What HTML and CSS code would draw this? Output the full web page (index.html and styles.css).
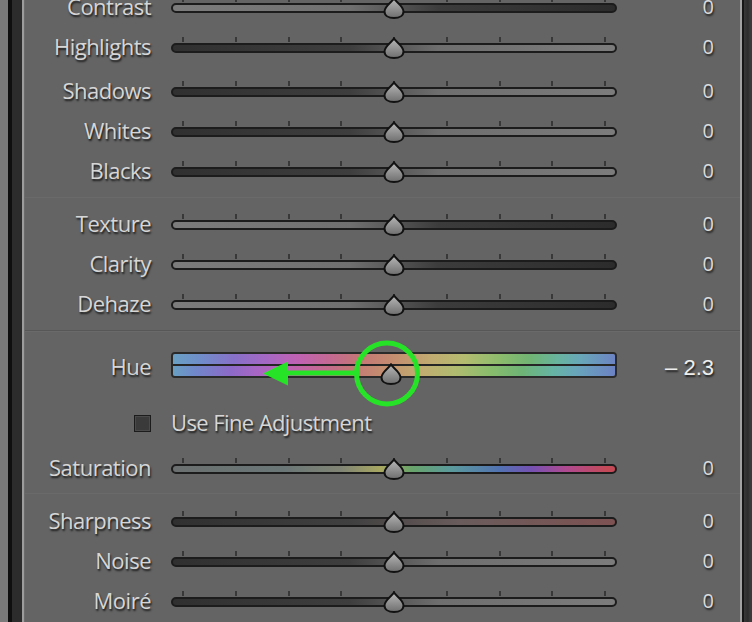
FILE: index.html
```html
<!DOCTYPE html>
<html>
<head>
<meta charset="utf-8">
<title>Develop</title>
<link rel="stylesheet" href="styles.css">
</head>
<body>

<svg class="defs" width="0" height="0">
	<defs>
		<linearGradient id="thumbFill" x1="0" y1="0" x2="0" y2="1">
			<stop offset="0" stop-color="#b8b8b8"/>
			<stop offset="1" stop-color="#6e6e6e"/>
		</linearGradient>
		<symbol id="thumb" viewBox="0 0 22 22">
			<path d="M11 1.5 C12.5 4.5 20.5 9 20.5 14.5 C20.5 18.5 16.5 21 11 21 C5.5 21 1.5 18.5 1.5 14.5 C1.5 9 9.5 4.5 11 1.5 Z" fill="url(#thumbFill)" stroke="#121212" stroke-width="2"/>
		</symbol>
	</defs>
</svg>

<div class="frame">
	<div class="edgeLeft"></div>

	<div class="panel">

		<div class="group g1">
			<div class="row">
				<div class="label">Contrast</div>
				<div class="slider">
					<div class="ticks"><i></i><i></i><i></i><i></i><i></i><i></i><i></i><i></i><i></i></div>
					<div class="track darkRight"></div>
					<svg class="thumb"><use href="#thumb"/></svg>
				</div>
				<div class="value">0</div>
			</div>
			<div class="row">
				<div class="label">Highlights</div>
				<div class="slider">
					<div class="ticks"><i></i><i></i><i></i><i></i><i></i><i></i><i></i><i></i><i></i></div>
					<div class="track lightRight"></div>
					<svg class="thumb"><use href="#thumb"/></svg>
				</div>
				<div class="value">0</div>
			</div>
			<div class="row shadows">
				<div class="label">Shadows</div>
				<div class="slider">
					<div class="ticks"><i></i><i></i><i></i><i></i><i></i><i></i><i></i><i></i><i></i></div>
					<div class="track lightRight"></div>
					<svg class="thumb"><use href="#thumb"/></svg>
				</div>
				<div class="value">0</div>
			</div>
			<div class="row">
				<div class="label">Whites</div>
				<div class="slider">
					<div class="ticks"><i></i><i></i><i></i><i></i><i></i><i></i><i></i><i></i><i></i></div>
					<div class="track lightRight"></div>
					<svg class="thumb"><use href="#thumb"/></svg>
				</div>
				<div class="value">0</div>
			</div>
			<div class="row">
				<div class="label">Blacks</div>
				<div class="slider">
					<div class="ticks"><i></i><i></i><i></i><i></i><i></i><i></i><i></i><i></i><i></i></div>
					<div class="track lightRight"></div>
					<svg class="thumb"><use href="#thumb"/></svg>
				</div>
				<div class="value">0</div>
			</div>
		</div>

		<div class="sep"></div>

		<div class="group g2">
			<div class="row">
				<div class="label">Texture</div>
				<div class="slider">
					<div class="ticks"><i></i><i></i><i></i><i></i><i></i><i></i><i></i><i></i><i></i></div>
					<div class="track darkRight"></div>
					<svg class="thumb"><use href="#thumb"/></svg>
				</div>
				<div class="value">0</div>
			</div>
			<div class="row">
				<div class="label">Clarity</div>
				<div class="slider">
					<div class="ticks"><i></i><i></i><i></i><i></i><i></i><i></i><i></i><i></i><i></i></div>
					<div class="track darkRight"></div>
					<svg class="thumb"><use href="#thumb"/></svg>
				</div>
				<div class="value">0</div>
			</div>
			<div class="row">
				<div class="label">Dehaze</div>
				<div class="slider">
					<div class="ticks"><i></i><i></i><i></i><i></i><i></i><i></i><i></i><i></i><i></i></div>
					<div class="track darkRight"></div>
					<svg class="thumb"><use href="#thumb"/></svg>
				</div>
				<div class="value">0</div>
			</div>
		</div>

		<div class="sep"></div>

		<div class="group g3">
			<div class="row">
				<div class="label">Hue</div>
				<div class="slider">
					<div class="hueBar">
						<div class="hueTop"></div>
						<div class="hueBottom"></div>
					</div>
					<svg class="thumb hueThumb"><use href="#thumb"/></svg>
					<!-- annotation drawn over the slider -->
					<svg class="marker" width="446" height="40">
						<circle cx="216" cy="25.5" r="30.5" fill="none" stroke="#27e327" stroke-width="5"/>
						<line x1="112" y1="25" x2="186" y2="25" stroke="#27e327" stroke-width="5"/>
						<polygon points="92,25.5 117,13.5 117,37.5" fill="#27e327"/>
					</svg>
				</div>
				<div class="value hueValue">&ndash; 2.3</div>
			</div>
			<div class="row fine">
				<div class="label"><span class="check"></span></div>
				<div class="checkText">Use Fine Adjustment</div>
				<div></div>
			</div>
			<div class="row saturation">
				<div class="label">Saturation</div>
				<div class="slider">
					<div class="ticks"><i></i><i></i><i></i><i></i><i></i><i></i><i></i><i></i><i></i></div>
					<div class="track satTrack"></div>
					<svg class="thumb"><use href="#thumb"/></svg>
				</div>
				<div class="value">0</div>
			</div>
		</div>

		<div class="sep"></div>

		<div class="group g4">
			<div class="row">
				<div class="label">Sharpness</div>
				<div class="slider">
					<div class="ticks"><i></i><i></i><i></i><i></i><i></i><i></i><i></i><i></i><i></i></div>
					<div class="track redRight"></div>
					<svg class="thumb"><use href="#thumb"/></svg>
				</div>
				<div class="value">0</div>
			</div>
			<div class="row">
				<div class="label">Noise</div>
				<div class="slider">
					<div class="ticks"><i></i><i></i><i></i><i></i><i></i><i></i><i></i><i></i><i></i></div>
					<div class="track lightRight"></div>
					<svg class="thumb"><use href="#thumb"/></svg>
				</div>
				<div class="value">0</div>
			</div>
			<div class="row">
				<div class="label">Moiré</div>
				<div class="slider">
					<div class="ticks"><i></i><i></i><i></i><i></i><i></i><i></i><i></i><i></i><i></i></div>
					<div class="track lightRight"></div>
					<svg class="thumb"><use href="#thumb"/></svg>
				</div>
				<div class="value">0</div>
			</div>
		</div>

	</div>

	<div class="edgeRight"></div>
</div>

</body>
</html>
```

FILE: styles.css
```css
html, body {
	margin: 0;
	padding: 0;
	height: 622px;
	overflow: hidden;
	background: #646464;
}

.defs {
	position: absolute;
	width: 0;
	height: 0;
}

.frame {
	display: flex;
	height: 622px;
}

.edgeLeft {
	width: 25px;
	flex: none;
	background: linear-gradient(to right, #7a7a7a 0, #7a7a7a 8px, #0f0f0f 8px, #0f0f0f 12px, #2c2c2c 12px, #2c2c2c 22px, #9c9c9c 22px, #9c9c9c 24px, #6c6c6c 24px);
}

.edgeRight {
	width: 12px;
	flex: none;
	background: linear-gradient(to right, #a2a2a2 0, #a2a2a2 2px, #161616 2px, #161616 4px, #383838 4px, #2c2c2c 8px, #3a3a3a 10px);
}

.panel {
	flex: 1;
	display: flex;
	flex-direction: column;
	margin-top: -12px;
	background: #646464;
	font-family: "Open Sans", "Noto Sans", sans-serif;
	color: #d6d6d6;
}

/* groups and separators */
.g1 { padding-bottom: 5px; }
.g2 { padding-top: 8px; padding-bottom: 5px; }
.g3 { padding-top: 17px; padding-bottom: 4px; }
.g4 { padding-top: 9px; }

.sep {
	height: 2px;
	background: #575757;
	border-bottom: 1px solid #6a6a6a;
	margin-bottom: -1px;
}

.row {
	display: grid;
	grid-template-columns: 126px 446px 1fr;
	column-gap: 20px;
	height: 40px;
	padding-right: 26px;
}
.row.shadows { margin-top: 4px; }
.row.fine { margin-top: 16px; }
.row.saturation { margin-top: 5px; }

.label {
	text-align: right;
	font-size: 22px;
	letter-spacing: -0.5px;
	line-height: 36px;
	text-shadow: 1px 2px 2px rgba(0, 0, 0, 0.75);
	white-space: nowrap;
}

.value {
	text-align: right;
	font-size: 20px;
	line-height: 38px;
	color: #dadada;
	text-shadow: 1px 2px 2px rgba(0, 0, 0, 0.7);
}
.hueValue {
	font-family: "Liberation Sans", Arial, sans-serif;
	font-size: 22px;
	line-height: 39px;
	color: #eeeeee;
}

/* slider parts */
.slider {
	position: relative;
	padding-top: 9px;
}

.ticks {
	display: flex;
	justify-content: space-between;
	height: 5px;
	margin-bottom: 1px;
	padding: 0 11px;
}
.ticks i {
	width: 2px;
	background: #383838;
}

.track {
	height: 10px;
	box-sizing: border-box;
	border: 2px solid #1c1c1c;
	border-radius: 5px;
}
.darkRight { background: linear-gradient(to right, #7c7c7c, #707070 40%, #3c3c3c 60%, #2c2c2c); }
.lightRight { background: linear-gradient(to right, #303030, #3e3e3e 40%, #6e6e6e 60%, #7c7c7c); }
.redRight { background: linear-gradient(to right, #303030, #404040 40%, #6a5c5c 65%, #7e5252); }
.satTrack {
	background: linear-gradient(to right, #6b6f6f 0%, #6a7676 25%, #808474 38%, #a8a860 47%, #68a46a 54%, #5a9a9c 63%, #5272b2 74%, #7452b2 81%, #b04a90 89%, #c44a58 98%);
}

.thumb {
	position: absolute;
	left: 50%;
	top: 9px;
	width: 22px;
	height: 22px;
	margin-left: -11px;
}

/* hue bar */
.hueBar {
	margin-top: -5px;
	height: 26px;
	box-sizing: border-box;
	border: 2px solid #2a2a2a;
	border-radius: 4px;
	overflow: hidden;
}
.hueTop {
	height: 10px;
	border-bottom: 2px solid #262626;
	background: linear-gradient(to right, #6aa0c4 0%, #6f8eca 6%, #8870c8 14%, #a468c4 21%, #c062b4 28%, #c46a90 36%, #c47676 42%, #c48e70 50%, #c2aa70 58%, #b4bc70 66%, #8cbc6c 74%, #70b474 81%, #68b49e 87%, #68a8b8 92%, #6c84c4 100%);
}
.hueBottom {
	height: 10px;
	background: linear-gradient(to right, #68a0c2 0%, #7088ca 5%, #8c6ac8 13%, #a866c4 19%, #c062b4 26%, #c46a90 34%, #c47676 40%, #c49070 48%, #c2ac70 56%, #b0bc70 64%, #88bc6c 72%, #6eb476 79%, #66b4a4 86%, #68a6ba 91%, #6c82c4 100%);
}
.hueThumb {
	top: 15px;
	margin-left: -14px;
}

.marker {
	position: absolute;
	left: 0;
	top: 0;
	overflow: visible;
}

/* fine adjustment checkbox */
.check {
	display: inline-block;
	width: 17px;
	height: 17px;
	box-sizing: border-box;
	margin-top: 11px;
	background: #3a3a3a;
	border: 1px solid #1c1c1c;
	box-shadow: inset 0 0 0 1px #4a4a4a;
	vertical-align: top;
}
.checkText {
	font-size: 22px;
	letter-spacing: -0.6px;
	line-height: 36px;
	text-shadow: 1px 2px 2px rgba(0, 0, 0, 0.75);
	white-space: nowrap;
}
```
